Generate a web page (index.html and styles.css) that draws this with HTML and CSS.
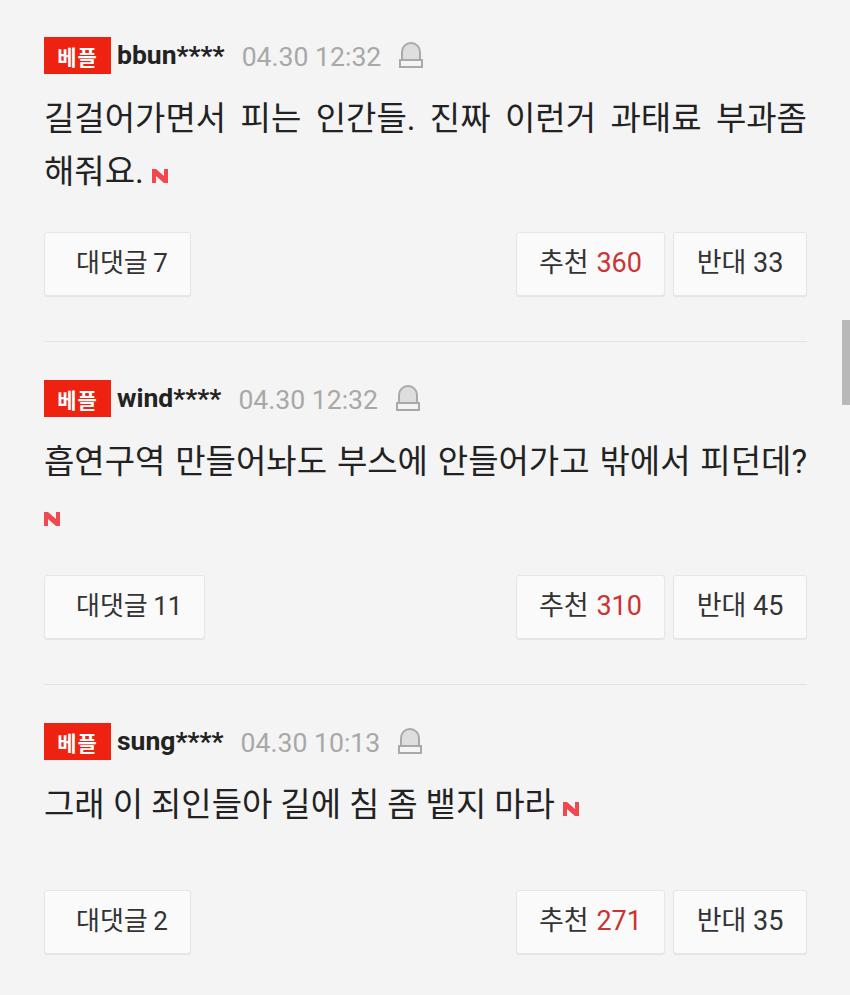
FILE: index.html
```html
<!DOCTYPE html>
<html lang="ko">
<head>
  <meta charset="UTF-8">
  <meta name="viewport" content="width=device-width, initial-scale=1.0">
  <title>댓글</title>
  <link rel="stylesheet" href="styles.css">
</head>
<body>

<div class="scroll-thumb"></div>

<ul class="comment-list">
  <li class="comment">
    <div class="comment-head">
      <span class="badge">베플</span>
      <span class="user">bbun****</span>
      <span class="date">04.30 12:32</span>
      <svg class="bell" viewBox="0 0 24 26"><path d="M3 19V10a9 9 0 0 1 18 0v9" fill="#dedede" stroke="#a9a9a9" stroke-width="2"/><rect x="1" y="18" width="22" height="7" fill="#f4f4f4" stroke="#a9a9a9" stroke-width="2"/></svg>
    </div>
    <p class="comment-text">길걸어가면서 피는 인간들. 진짜 이런거 과태료 부과좀 <span class="nowrap">해줘요. <svg class="new-mark" viewBox="0 0 16 14"><path d="M0 14V0h4l8 7V0h4v14h-4L4 7v7z"/></svg></span></p>
    <div class="comment-foot">
      <button class="btn btn-reply">대댓글 7</button>
      <div class="votes">
        <button class="btn btn-up">추천 <em>360</em></button>
        <button class="btn btn-down">반대 33</button>
      </div>
    </div>
  </li>
  <li class="comment">
    <div class="comment-head">
      <span class="badge">베플</span>
      <span class="user">wind****</span>
      <span class="date">04.30 12:32</span>
      <svg class="bell" viewBox="0 0 24 26"><path d="M3 19V10a9 9 0 0 1 18 0v9" fill="#dedede" stroke="#a9a9a9" stroke-width="2"/><rect x="1" y="18" width="22" height="7" fill="#f4f4f4" stroke="#a9a9a9" stroke-width="2"/></svg>
    </div>
    <p class="comment-text">흡연구역 만들어놔도 부스에 안들어가고 밖에서 피던데? <svg class="new-mark" viewBox="0 0 16 14"><path d="M0 14V0h4l8 7V0h4v14h-4L4 7v7z"/></svg></p>
    <div class="comment-foot">
      <button class="btn btn-reply">대댓글 11</button>
      <div class="votes">
        <button class="btn btn-up">추천 <em>310</em></button>
        <button class="btn btn-down">반대 45</button>
      </div>
    </div>
  </li>
  <li class="comment">
    <div class="comment-head">
      <span class="badge">베플</span>
      <span class="user">sung****</span>
      <span class="date">04.30 10:13</span>
      <svg class="bell" viewBox="0 0 24 26"><path d="M3 19V10a9 9 0 0 1 18 0v9" fill="#dedede" stroke="#a9a9a9" stroke-width="2"/><rect x="1" y="18" width="22" height="7" fill="#f4f4f4" stroke="#a9a9a9" stroke-width="2"/></svg>
    </div>
    <p class="comment-text">그래 이 죄인들아 길에 침 좀 뱉지 마라 <svg class="new-mark" viewBox="0 0 16 14"><path d="M0 14V0h4l8 7V0h4v14h-4L4 7v7z"/></svg></p>
    <div class="comment-foot">
      <button class="btn btn-reply">대댓글 2</button>
      <div class="votes">
        <button class="btn btn-up">추천 <em>271</em></button>
        <button class="btn btn-down">반대 35</button>
      </div>
    </div>
  </li>
</ul>

</body>
</html>
```

FILE: styles.css
```css
html, body {
  height: 100%;
}

body {
  overflow: hidden;
  margin: 0;
  background-color: #f4f4f4;
  color: #222222;
  font-family: Roboto, 'Noto Sans CJK KR', sans-serif;
}

.scroll-thumb {
  position: absolute;
  top: 320px;
  right: 0;
  width: 8px;
  height: 85px;
  background-color: #b8b8b8;
}

.comment-list {
  list-style: none;
  margin: 0;
  padding: 37px 43px 0 44px;
}

.comment {
  margin-bottom: 38px;
  padding-bottom: 45px;
  border-bottom: 1px solid #e2e2e2;
}

.comment:last-child {
  margin-bottom: 0;
  padding-bottom: 0;
  border-bottom: 0;
}

.comment-head {
  display: flex;
  align-items: center;
  height: 37px;
}

.badge {
  display: flex;
  align-items: center;
  justify-content: center;
  width: 67px;
  height: 37px;
  margin-right: 6px;
  background-color: #ee2211;
  color: #ffffff;
  font-size: 21px;
  font-weight: 700;
  letter-spacing: 1px;
}

.user {
  margin-right: 17px;
  margin-bottom: 3px;
  font-size: 26.5px;
  font-weight: 700;
}

.date {
  margin-top: 1px;
  margin-right: 18px;
  color: #a8a8a8;
  font-size: 26.6px;
}

.bell {
  width: 24px;
  height: 26px;
  margin-bottom: 1px;
}

.comment-text {
  min-height: 78px;
  margin: 18px 0 0;
  font-size: 33px;
  line-height: 53px;
  text-align: justify;
  word-spacing: -0.25px;
}

.nowrap {
  white-space: nowrap;
}

.new-mark {
  width: 16px;
  height: 14px;
  fill: #f0484e;
  vertical-align: 0;
}

.comment-foot {
  display: flex;
  justify-content: space-between;
  margin-top: 34px;
}

.votes {
  display: flex;
  gap: 8px;
}

.btn {
  height: 64px;
  padding: 0 0 8px;
  border: 1px solid #e6e6e6;
  border-radius: 3px;
  background-color: #fafafa;
  box-shadow: 0 1px 1px #e4e4e4;
  color: #333333;
  font-family: inherit;
  font-size: 27px;
}

.btn em {
  margin-left: 1px;
  color: #cc3333;
  font-style: normal;
}

.btn-reply {
  padding: 0 22px 8px 31px;
  font-size: 26px;
  word-spacing: -1px;
}

.btn-up {
  width: 149px;
}

.btn-down {
  width: 134px;
}
```
